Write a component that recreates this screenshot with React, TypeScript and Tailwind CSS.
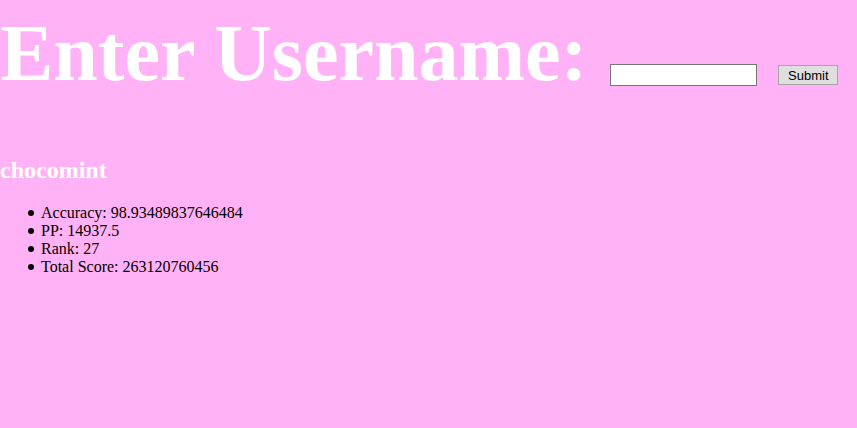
export default function App() {
  const stats = [
    { label: "Accuracy", value: "98.93489837646484" },
    { label: "PP", value: "14937.5" },
    { label: "Rank", value: "27" },
    { label: "Total Score", value: "263120760456" },
  ];

  return (
    <main className="w-[857px] h-[428px] bg-[#ffb3f6] font-['Liberation_Serif',serif] text-black overflow-hidden">
      {/* header row: title + form */}
      <div className="flex items-start pt-[9px]">
        <h1 className="text-[80px] leading-[89px] font-bold text-white whitespace-nowrap">
          Enter Username:
        </h1>
        <input
          type="text"
          className="ml-[23px] mt-[55px] w-[147px] h-[22px] bg-white border border-[#767676] px-1 text-[13px] font-['Liberation_Sans',sans-serif] outline-none"
        />
        <button className="ml-[21px] mt-[56px] w-[60px] h-[20px] bg-[#dfdfdf] border border-[#a5a5a5] text-[13px] leading-none font-['Liberation_Sans',sans-serif] text-black">
          Submit
        </button>
      </div>

      {/* result */}
      <h2 className="mt-[59px] text-[24px] leading-[27px] font-bold text-white">chocomint</h2>
      <ul className="mt-[20px] text-[16px] leading-[18px]">
        {stats.map((s) => (
          <li key={s.label} className="flex items-center">
            <span className="ml-[28px] mr-[7px] w-[6px] h-[6px] rounded-full bg-black" />
            <span>
              {s.label}: {s.value}
            </span>
          </li>
        ))}
      </ul>
    </main>
  );
}
